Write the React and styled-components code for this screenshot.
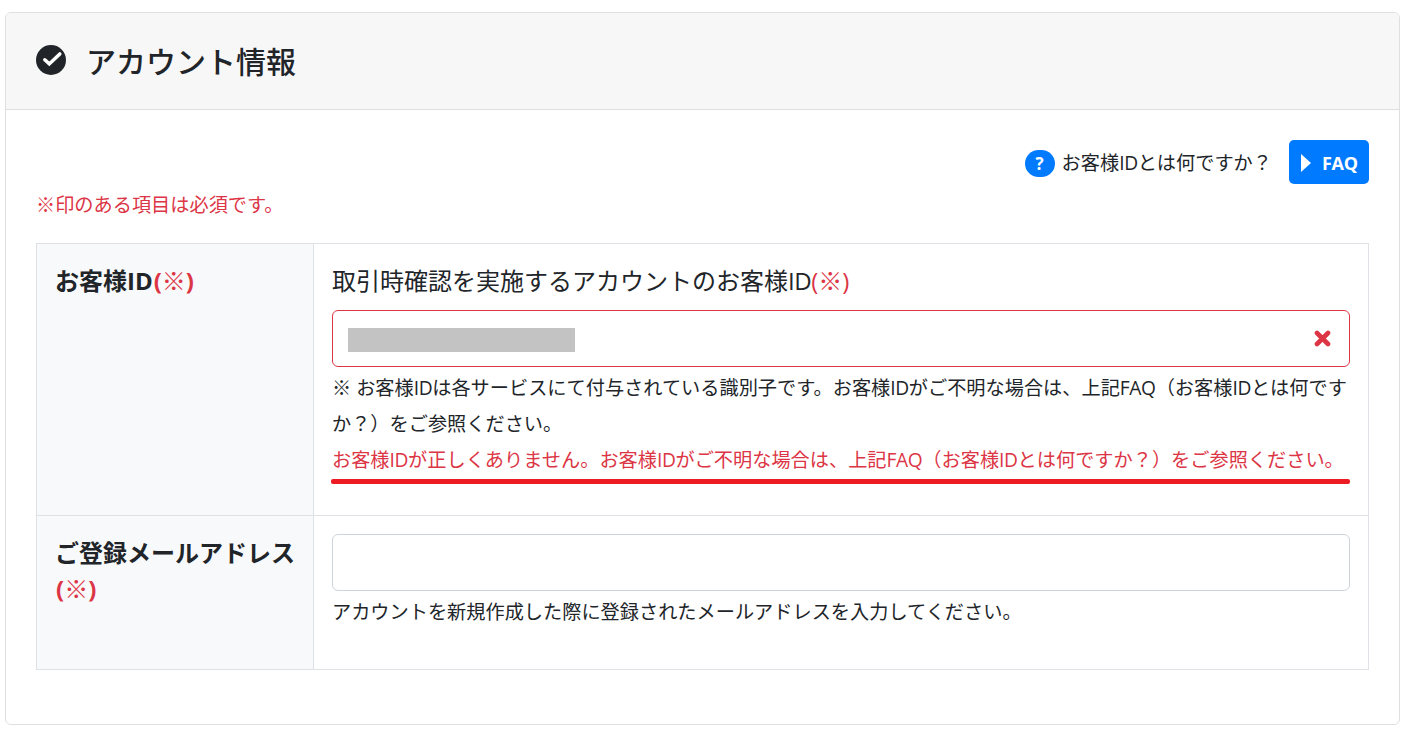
import React from "react";
import styled, { createGlobalStyle } from "styled-components";

const GlobalStyle = createGlobalStyle`
  * {
    box-sizing: border-box;
  }
  body {
    margin: 0;
    background: #fff;
    color: #212529;
    font-family: "Open Sans", "Noto Sans CJK JP", sans-serif;
    font-size: 24px;
    line-height: 36px;
  }
`;

const Card = styled.section`
  width: 1395px;
  height: 713px;
  margin: 12px 0 0 5px;
  border: 1px solid #dfdfdf;
  border-radius: 6px;
  overflow: hidden;
`;

const CardHeader = styled.header`
  display: flex;
  align-items: center;
  gap: 20px;
  height: 97px;
  padding: 0 30px 2px;
  background: #f7f7f7;
  border-bottom: 1px solid #dfdfdf;
  svg {
    display: block;
    width: 30px;
    height: 30px;
  }
`;

const Title = styled.h1`
  margin: 4px 0 0;
  font-size: 30px;
  font-weight: 500;
`;

const CardBody = styled.div`
  padding: 30px;
`;

const HelpBar = styled.div`
  display: flex;
  align-items: center;
  justify-content: flex-end;
  height: 44px;
  font-size: 19.2px;
`;

const Question = styled.span`
  display: flex;
  align-items: center;
  gap: 7px;
  padding-top: 2px;
`;

const Badge = styled.span`
  width: 30px;
  height: 27px;
  border-radius: 13.5px;
  background: #007bff;
  color: #fff;
  font-size: 17px;
  font-weight: 700;
  line-height: 27px;
  text-align: center;
`;

const FaqButton = styled.button`
  display: flex;
  align-items: center;
  gap: 11px;
  width: 80px;
  height: 44px;
  margin-left: 17px;
  padding: 2px 0 0 12px;
  border: 0;
  border-radius: 5px;
  background: #007bff;
  color: #fff;
  font-family: inherit;
  font-size: 18px;
  font-weight: 700;
  letter-spacing: -0.3px;
  svg {
    flex: none;
    margin-top: -1px;
  }
`;

const Notice = styled.p`
  margin: 3px 0 20px;
  color: #dc3545;
  font-size: 19.2px;
`;

const Table = styled.div`
  display: grid;
  grid-template-columns: 277px 1fr;
  grid-template-rows: 272px 154px;
  border: solid #dee2e6;
  border-width: 1px 0 0 1px;
`;

const Cell = styled.div`
  padding: 18px;
  border: solid #dee2e6;
  border-width: 0 1px 1px 0;
`;

const Required = styled.span`
  color: #dc3545;
  span {
    font-weight: 400;
  }
`;

const HeadCell = styled(Cell)`
  padding-top: 19px;
  background: #f8f9fb;
  font-weight: 700;
  ${Required} {
    margin-left: 1px;
  }
`;

const Latin = styled.span`
  letter-spacing: -0.02em;
`;

const Label = styled.label`
  display: block;
  padding-top: 1px;
  margin-bottom: 11px;
`;

const Field = styled.div`
  display: flex;
  align-items: center;
  justify-content: space-between;
  height: 57px;
  padding: 0 18px 0 15px;
  border: 1px solid ${(props) => (props.$invalid ? "#dc3545" : "#ced4da")};
  border-radius: 6px;
  svg {
    display: block;
  }
`;

const MaskedValue = styled.span`
  width: 227px;
  height: 24px;
  margin-top: 3px;
  background: #c3c3c3;
`;

const Help = styled.p`
  margin: ${(props) => (props.$error ? "0" : "3px 0 0")};
  color: ${(props) => (props.$error ? "#dc3545" : "inherit")};
  font-size: 19.2px;
`;

const Underline = styled.div`
  height: 5px;
  margin: 1px 0 0 -1px;
  border-radius: 2px;
  background: #ed1c24;
`;

const Mark = () => (
  <Required>
    (<span>※</span>)
  </Required>
);

const Id = () => <Latin>ID</Latin>;

const App = () => {
  return (
    <>
      <GlobalStyle />
      <Card lang="ja">
        <CardHeader>
          <svg viewBox="0 0 30 30">
            <circle cx="15" cy="15" r="15" fill="#212529" />
            <path
              d="M8.8 14.8L13.3 18.9L23.8 8.9"
              fill="none"
              stroke="#fff"
              strokeWidth="3.5"
              strokeLinecap="round"
            />
          </svg>
          <Title>アカウント情報</Title>
        </CardHeader>
        <CardBody>
          <HelpBar>
            <Question>
              <Badge>?</Badge>
              <span>
                お客様
                <Id />
                とは何ですか？
              </span>
            </Question>
            <FaqButton type="button">
              <svg width="10" height="18" viewBox="0 0 10 18">
                <path d="M0 0L10 9L0 18Z" fill="#fff" />
              </svg>
              FAQ
            </FaqButton>
          </HelpBar>
          <Notice>※印のある項目は必須です。</Notice>
          <Table>
            <HeadCell>
              お客様ID
              <Mark />
            </HeadCell>
            <Cell>
              <Label>
                取引時確認を実施するアカウントのお客様
                <Id />
                <Mark />
              </Label>
              <Field $invalid>
                <MaskedValue />
                <svg width="17" height="17" viewBox="0 0 17 17">
                  <path
                    d="M3 3L14 14M14 3L3 14"
                    stroke="#dc3545"
                    strokeWidth="4.6"
                    strokeLinecap="round"
                  />
                </svg>
              </Field>
              <Help>
                ※ お客様
                <Id />
                は各サービスにて付与されている識別子です。お客様
                <Id />
                がご不明な場合は、上記
                <Latin>FAQ</Latin>
                （お客様
                <Id />
                とは何です
                <br />
                か？）をご参照ください。
              </Help>
              <Help $error>
                お客様
                <Id />
                が正しくありません。お客様
                <Id />
                がご不明な場合は、上記
                <Latin>FAQ</Latin>
                （お客様
                <Id />
                とは何ですか？）をご参照ください。
              </Help>
              <Underline />
            </Cell>
            <HeadCell>
              ご登録メールアドレス
              <Mark />
            </HeadCell>
            <Cell>
              <Field />
              <Help>
                アカウントを新規作成した際に登録されたメールアドレスを入力してください。
              </Help>
            </Cell>
          </Table>
        </CardBody>
      </Card>
    </>
  );
};

export default App;
